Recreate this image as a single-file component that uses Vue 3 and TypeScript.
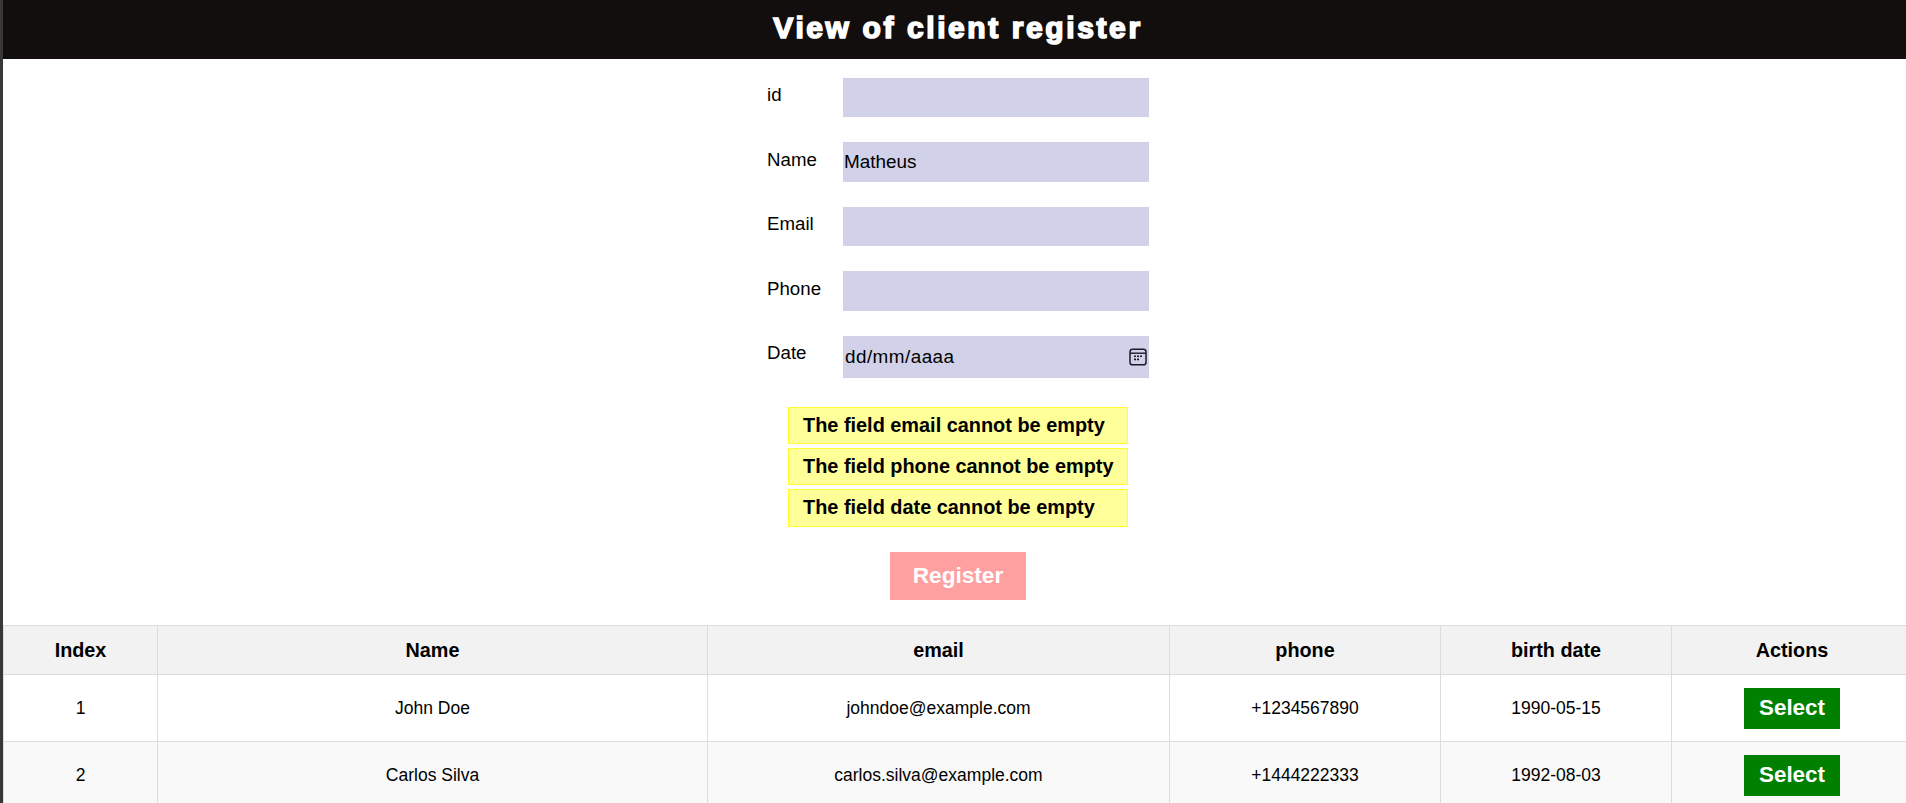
<script setup lang="ts">
import { ref } from 'vue';

interface Client {
    id: number;
    name: string;
    email: string;
    phone: string;
    birth: string;
}

const name = ref('Matheus');

const errors = ['email', 'phone', 'date'];

const clients: Client[] = [
    { id: 1, name: 'John Doe', email: 'johndoe@example.com', phone: '+1234567890', birth: '1990-05-15' },
    { id: 2, name: 'Carlos Silva', email: 'carlos.silva@example.com', phone: '+1444222333', birth: '1992-08-03' },
];
</script>

<template>
    <div class="page">
        <header class="top-bar">
            <h1 class="title">View of client register</h1>
        </header>

        <form class="client-form" @submit.prevent>
            <div class="form-row">
                <label class="form-label" for="f-id">id</label>
                <input id="f-id" class="form-input" type="text" />
            </div>
            <div class="form-row">
                <label class="form-label" for="f-name">Name</label>
                <input id="f-name" v-model="name" class="form-input" type="text" />
            </div>
            <div class="form-row">
                <label class="form-label" for="f-email">Email</label>
                <input id="f-email" class="form-input" type="text" />
            </div>
            <div class="form-row">
                <label class="form-label" for="f-phone">Phone</label>
                <input id="f-phone" class="form-input" type="text" />
            </div>
            <div class="form-row">
                <label class="form-label" for="f-date">Date</label>
                <div class="date-field">
                    <input id="f-date" class="form-input date-input" type="text" value="dd/mm/aaaa" />
                    <svg class="date-icon" viewBox="0 0 18 18" width="18" height="18" fill="none">
                        <rect x="1" y="1.2" width="16" height="15.6" rx="2.6" stroke="#1b1b28" stroke-width="1.5" />
                        <path d="M1 5.2h16" stroke="#1b1b28" stroke-width="1.4" />
                        <path d="M5 8.2h2M8 8.2h2M11 8.2h2M5 11.4h2M8 11.4h2" stroke="#1b1b28" stroke-width="1.6" />
                    </svg>
                </div>
            </div>

            <div class="error-list">
                <div v-for="field in errors" :key="field" class="error-item">The field {{ field }} cannot be empty</div>
            </div>

            <button class="register-btn" type="submit">Register</button>
        </form>

        <table class="client-table">
            <colgroup>
                <col class="col-index" />
                <col class="col-name" />
                <col class="col-email" />
                <col class="col-phone" />
                <col class="col-birth" />
                <col />
            </colgroup>
            <thead>
                <tr>
                    <th>Index</th>
                    <th>Name</th>
                    <th>email</th>
                    <th>phone</th>
                    <th>birth date</th>
                    <th>Actions</th>
                </tr>
            </thead>
            <tbody>
                <tr v-for="client in clients" :key="client.id">
                    <td>{{ client.id }}</td>
                    <td>{{ client.name }}</td>
                    <td>{{ client.email }}</td>
                    <td>{{ client.phone }}</td>
                    <td>{{ client.birth }}</td>
                    <td><button class="select-btn" type="button">Select</button></td>
                </tr>
            </tbody>
        </table>
    </div>
</template>

<style>
html, body { height: 100%; overflow: hidden; background: #fff; }
#app { box-sizing: border-box; height: 100vh; overflow: hidden; border-left: 3px solid #383838; font-family: "Liberation Sans", Arial, sans-serif; }
</style>

<style scoped>
.page { width: 1910px; }

/* Header */
.top-bar { height: 59px; background: #120e0d; display: flex; align-items: flex-start; justify-content: center; }
.title { margin: 0; color: #fff; font-size: 30px; font-weight: 700; letter-spacing: 2.6px; -webkit-text-stroke: 1.6px #fff; line-height: 55px; }

/* Form */
.client-form { display: flex; flex-direction: column; align-items: center; padding-top: 18.8px; }
.form-row { display: flex; align-items: flex-start; width: 382px; margin-bottom: 25px; }
.form-row:nth-child(5) { margin-bottom: 29px; }
.form-label { width: 76px; flex: none; font-size: 18.7px; line-height: 22px; padding-top: 6.4px; color: #000; }
.form-input { box-sizing: border-box; width: 306px; height: 39.5px; padding: 0 1px; border: none; outline: none; background: #d1d1e9; font-family: inherit; font-size: 18.9px; color: #000; }
.date-field { position: relative; width: 306px; height: 42px; }
.date-input { height: 42px; padding-left: 2px; letter-spacing: 0.45px; }
.date-icon { position: absolute; right: 2px; top: 12px; }

/* Errors */
.error-list { display: flex; flex-direction: column; gap: 4px; width: 340px; }
.error-item { box-sizing: border-box; height: 37.3px; padding-left: 14px; background: #ffff99; border: 1px solid #ffff33; font-size: 19.9px; font-weight: 700; line-height: 34px; color: #000; white-space: nowrap; }

.register-btn { width: 136px; height: 48px; margin-top: 25.6px; border: none; background: #ffa0a0; color: #fff; font-family: inherit; font-size: 22.6px; font-weight: 700; }

/* Table */
.client-table { width: 100%; margin-top: 25px; border-collapse: collapse; table-layout: fixed; font-size: 17.5px; color: #000; }
.col-index { width: 154px; }
.col-name { width: 550px; }
.col-email { width: 462px; }
.col-phone { width: 271px; }
.col-birth { width: 231px; }
.client-table th, .client-table td { border: 1px solid #ddd; text-align: center; padding: 0; }
.client-table th { height: 48px; background: #f2f2f2; font-size: 19.8px; font-weight: 700; }
.client-table td { height: 66px; }
.client-table tbody tr:nth-child(even) td { background: #f9f9f9; }
.select-btn { display: block; width: 96px; height: 41px; margin: 0 auto; border: none; background: #008000; color: #fff; font-family: inherit; font-size: 22.4px; font-weight: 700; }
</style>
